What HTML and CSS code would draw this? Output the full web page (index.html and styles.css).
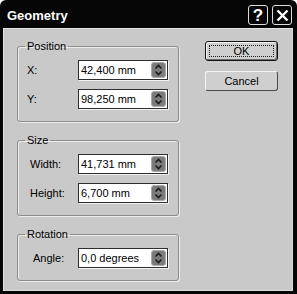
FILE: index.html
```html
<!DOCTYPE html>
<html lang="en">
<head>
  <meta charset="UTF-8" />
  <title>Geometry</title>
  <link rel="stylesheet" href="styles.css">
</head>
<body>

  <div class="dialog">
    <div class="titlebar">
      <div class="title">Geometry</div>
      <div class="tb-btn help">?</div>
      <div class="tb-btn close">
        <svg width="13" height="13" viewBox="0 0 13 13">
          <path d="M1.5 1.5 L11.5 11.5 M11.5 1.5 L1.5 11.5" stroke="#fff" stroke-width="2.4" fill="none" />
        </svg>
      </div>
    </div>

    <div class="client">
      <div class="groups">
        <fieldset class="group pos">
          <legend>Position</legend>
          <div class="row">
            <label>X:</label>
            <div class="field"><span>42,400 mm</span><div class="spin"></div></div>
          </div>
          <div class="row">
            <label>Y:</label>
            <div class="field"><span>98,250 mm</span><div class="spin"></div></div>
          </div>
        </fieldset>

        <fieldset class="group size">
          <legend>Size</legend>
          <div class="row">
            <label>Width:</label>
            <div class="field"><span>41,731 mm</span><div class="spin"></div></div>
          </div>
          <div class="row">
            <label>Height:</label>
            <div class="field"><span>6,700 mm</span><div class="spin"></div></div>
          </div>
        </fieldset>

        <fieldset class="group rot">
          <legend>Rotation</legend>
          <div class="row">
            <label>Angle:</label>
            <div class="field"><span>0,0 degrees</span><div class="spin"></div></div>
          </div>
        </fieldset>
      </div>

      <div class="actions">
        <button class="btn default">OK</button>
        <button class="btn">Cancel</button>
      </div>
    </div>
  </div>

  <script>
    // spinner arrows are the same for every field
    const arrows =
      '<svg width="9" height="12" viewBox="0 0 9 12">' +
      '<path d="M1.5 4.5 L4.5 1.5 L7.5 4.5 M1.5 7.5 L4.5 10.5 L7.5 7.5" stroke="#1a1a1a" stroke-width="1.6" fill="none" />' +
      '</svg>';
    document.querySelectorAll('.spin').forEach(el => el.innerHTML = arrows);
  </script>

</body>
</html>
```

FILE: styles.css
```css
*, *::before, *::after {
  box-sizing: border-box;
}

:root {
  --color-face: #c9c9c9;
  --color-frame: #060606;
  --color-line: #8c8c8c;
}

html, body {
  margin: 0;
  padding: 0;
  background-color: #ffffff;
  font-family: 'Liberation Sans', Arial, sans-serif;
  font-size: 11px;
  color: #000;
}

.dialog {
  width: 297px;
  height: 294px;
  background-color: var(--color-frame);
  border-radius: 6px 6px 0 0;
  display: flex;
  flex-direction: column;
}

.titlebar {
  height: 28px;
  display: flex;
  align-items: center;
  padding: 2px 5px 0 7px;
  color: #fff;
}

.title {
  flex: 1;
  font-size: 13px;
  font-weight: 700;
}

.tb-btn {
  width: 20px;
  height: 20px;
  margin-left: 4px;
  border: 1px solid #dcdcdc;
  border-radius: 3px;
  display: flex;
  align-items: center;
  justify-content: center;
}

.tb-btn.help {
  font-size: 17px;
  font-weight: 700;
  line-height: 1;
}

.client {
  flex: 1;
  margin: 0 4px 3px 3px;
  padding-top: 12px;
  background-color: var(--color-face);
  box-shadow: inset 1px 1px 0 #e4e4e4, inset -1px -1px 0 #dadada;
  display: flex;
  align-items: flex-start;
}

.groups {
  width: 162px;
  margin-left: 14px;
  display: flex;
  flex-direction: column;
  gap: 12px;
}

.group {
  margin: 0;
  min-width: 0;
  padding: 8px 0 12px;
  border: 1px solid var(--color-line);
  border-radius: 3px;
  box-shadow: inset 1px 1px 0 #ececec, 1px 1px 0 #ececec;
}

.group legend {
  margin-left: 7px;
  padding: 0 2px;
  line-height: 12px;
}

.row {
  display: flex;
  align-items: center;
  height: 20px;
  padding-right: 10px;
}

.row + .row {
  margin-top: 9px;
}

.row label {
  flex: 1;
}

.pos .row label {
  padding-left: 9px;
}

.size .row label {
  padding-left: 12px;
}

.rot .row label {
  padding-left: 15px;
}

.field {
  width: 90px;
  height: 20px;
  background-color: #fff;
  border: 1px solid #2e2e2e;
  box-shadow: 1px 1px 0 #f2f2f2;
  display: flex;
  align-items: center;
  padding-left: 2px;
}

.field span {
  flex: 1;
}

.spin {
  width: 15px;
  height: 16px;
  margin-right: 1px;
  background-color: #7b7b7b;
  border: 1px solid #a9a9a9;
  border-radius: 3px;
  display: flex;
  align-items: center;
  justify-content: center;
}

.spin svg {
  display: block;
}

.actions {
  width: 73px;
  margin-left: 26px;
  padding-top: 1px;
  display: flex;
  flex-direction: column;
  gap: 10px;
}

.btn {
  position: relative;
  height: 20px;
  padding: 0;
  font-family: 'Liberation Sans', Arial, sans-serif;
  font-size: 11px;
  color: #000;
  background-color: #cfcfcf;
  border: 1px solid;
  border-color: #f4f4f4 #4a4a4a #4a4a4a #f4f4f4;
  border-radius: 3px;
}

.btn.default {
  border: 1px solid #111;
  box-shadow: inset 1px 1px 0 #f4f4f4, inset -1px -1px 0 #6a6a6a;
}

.btn.default::before {
  content: '';
  position: absolute;
  top: 3px;
  left: 3px;
  right: 3px;
  bottom: 3px;
  border: 1px dotted #222;
}
```
